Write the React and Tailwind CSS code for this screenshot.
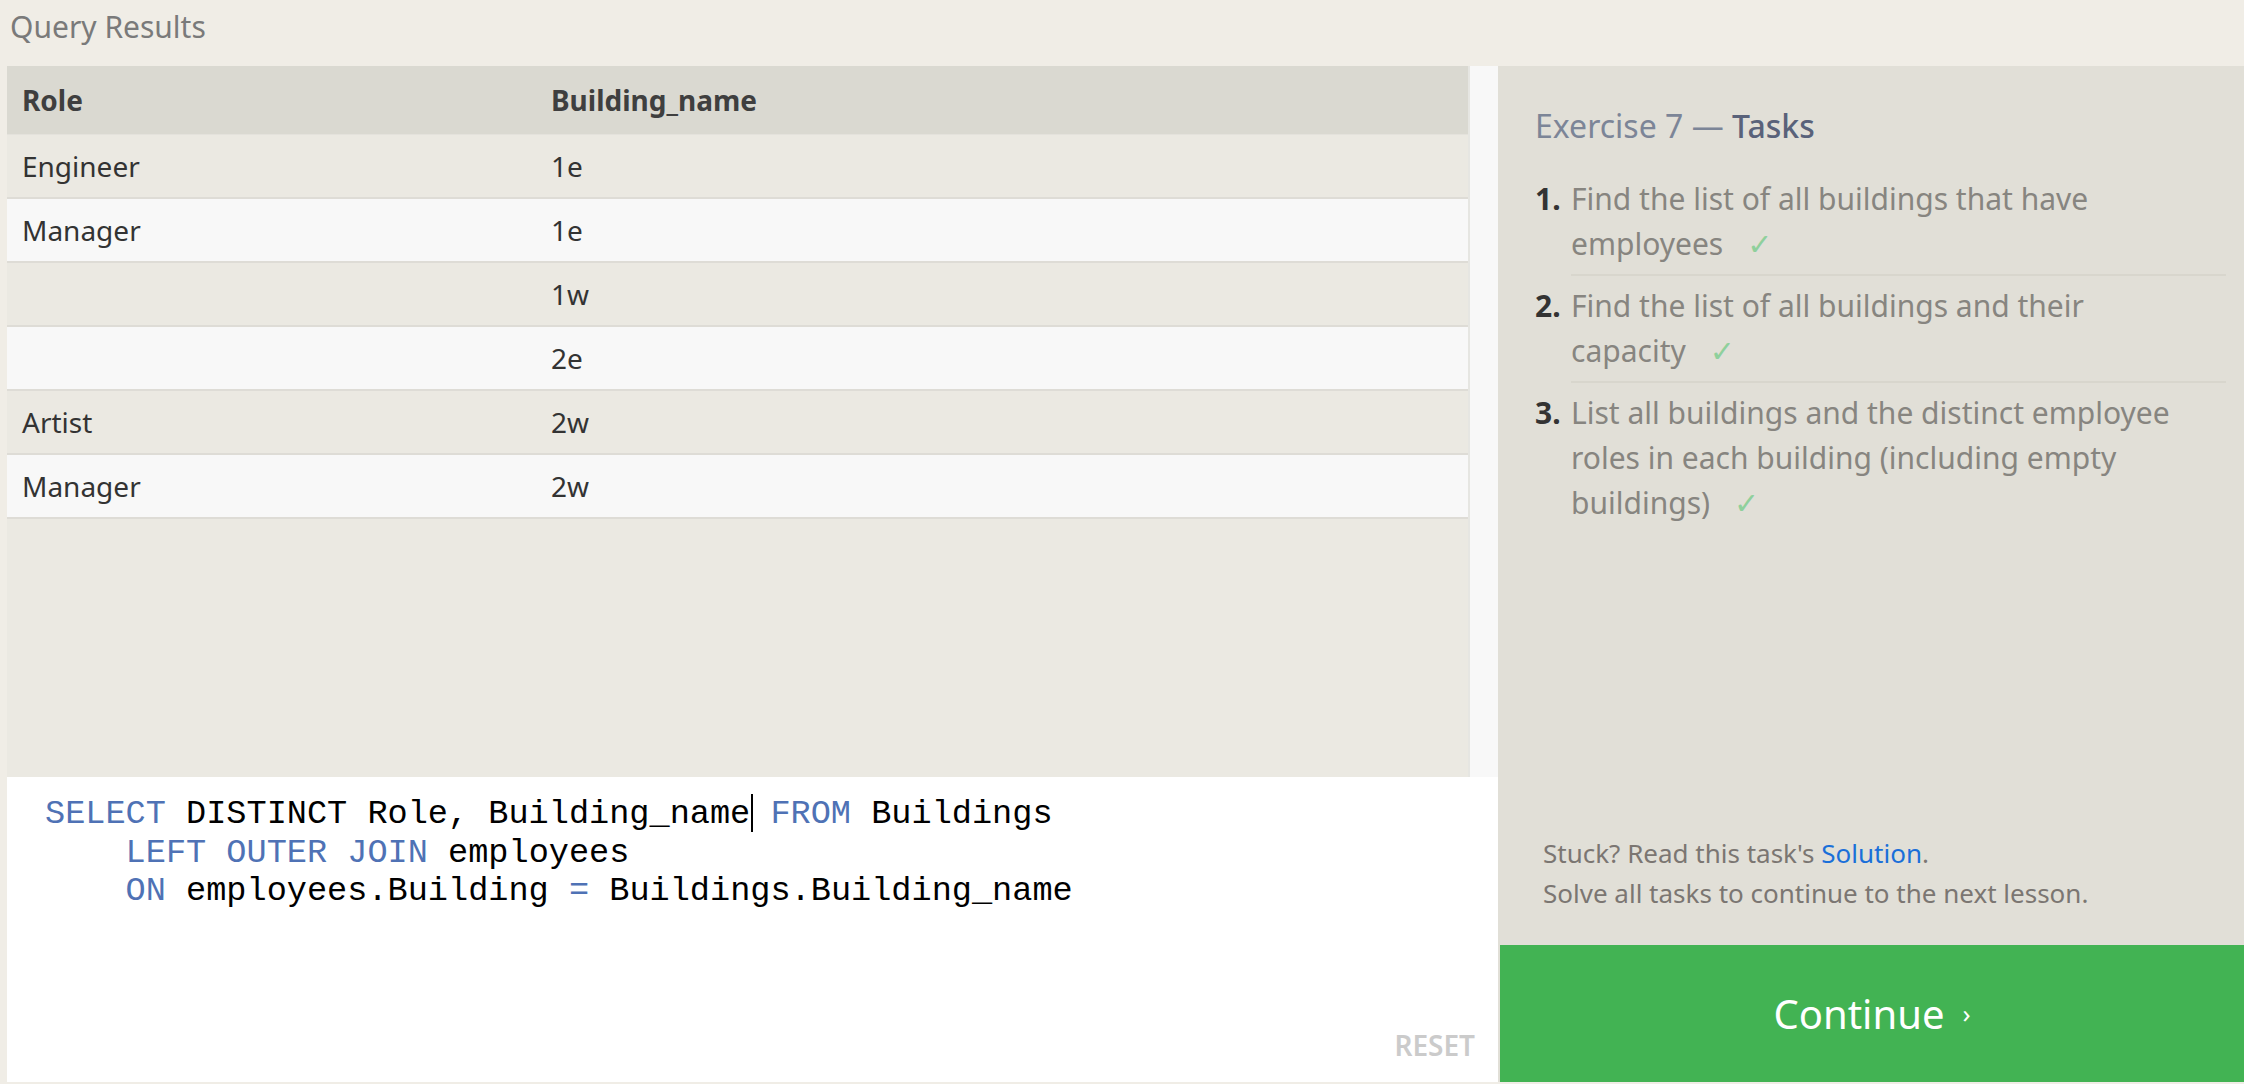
import React from "react";

const rows = [
  { role: "Engineer", building: "1e" },
  { role: "Manager", building: "1e" },
  { role: "", building: "1w" },
  { role: "", building: "2e" },
  { role: "Artist", building: "2w" },
  { role: "Manager", building: "2w" },
];

const tasks = [
  "Find the list of all buildings that have employees",
  "Find the list of all buildings and their capacity",
  "List all buildings and the distinct employee roles in each building (including empty buildings)",
];

function Kw({ children }) {
  return <span className="text-[#4f72b5]">{children}</span>;
}

export default function App() {
  return (
    <div className="w-[2244px] h-[1084px] bg-[#f0ede6] flex flex-col font-['Noto_Sans',sans-serif] overflow-hidden">
      {/* header */}
      <div className="h-[66px] shrink-0 px-[10px] text-[30px] leading-[54px] text-[#7a7a7a]">
        Query Results
      </div>

      <div className="flex-1 flex pl-[7px] pb-[2px] bg-[#f0ede6]">
        {/* left: results + editor */}
        <div className="w-[1491px] flex flex-col">
          <div className="h-[711px] flex">
            <div className="w-[1461px] bg-[#ebe9e2] flex flex-col">
              <div className="h-[69px] flex items-center bg-[#dad9d1] border-b border-[#e4e2dc] text-[28px] font-bold text-[#3f3f3f]">
                <div className="w-[529px] pl-[15px]">Role</div>
                <div className="pl-[15px]">Building_name</div>
              </div>
              {rows.map((r, i) => (
                <div
                  key={i}
                  className={`h-[64px] flex items-center border-b-2 border-[#dedcd6] text-[28px] text-[#333] ${
                    i % 2 === 0 ? "bg-[#ebe9e2]" : "bg-[#f8f8f8]"
                  }`}
                >
                  <div className="w-[529px] pl-[15px]">{r.role}</div>
                  <div className="pl-[15px]">{r.building}</div>
                </div>
              ))}
            </div>
            <div className="flex-1 bg-[#f8f8f8] border-l-2 border-[#e6e6e2]"></div>
          </div>

          {/* editor */}
          <div className="flex-1 bg-white flex flex-col pl-[38px] pt-[18px] pr-[23px] pb-[23px]">
            <pre className="font-['Liberation_Mono',monospace] text-[33.6px] leading-[38.5px] text-black">
              <Kw>SELECT</Kw> DISTINCT Role, Building_name
              <span className="relative">
                <span className="absolute left-[1px] top-[-1px] w-[2px] h-[38px] bg-black"></span>
              </span>{" "}
              <Kw>FROM</Kw> Buildings
              {"\n    "}
              <Kw>LEFT OUTER JOIN</Kw> employees
              {"\n    "}
              <Kw>ON</Kw> employees.Building <Kw>=</Kw> Buildings.Building_name
            </pre>
            <div className="flex-1"></div>
            <div className="self-end text-[28px] leading-[28px] text-[#cbcbcb] font-semibold">RESET</div>
          </div>
        </div>

        {/* right: tasks */}
        <div className="flex-1 flex flex-col bg-[#e1dfd7]">
          <div className="flex-1 pl-[37px] pr-[18px] pt-[40px]">
            <h2 className="text-[32px] leading-[40px] text-[#7c8597]">
              Exercise 7 — <span className="text-[#59627a] font-medium">Tasks</span>
            </h2>
            <ol className="mt-[30px]">
              {tasks.map((t, i) => (
                <li key={i} className={`flex text-[30px] leading-[45px] ${i > 0 ? "pt-[7px]" : ""}`}>
                  <span className="w-[36px] shrink-0 font-bold text-[#333]">{i + 1}.</span>
                  <div
                    className={`flex-1 text-[#878580] ${
                      i < tasks.length - 1 ? "pb-[7px] border-b-2 border-[#d8d6cd]" : ""
                    }`}
                  >
                    {t}
                    <span className="ml-[24px] font-['DejaVu_Sans',sans-serif] text-[30px] leading-[45px] text-[#8fd09c]">✓</span>
                  </div>
                </li>
              ))}
            </ol>
          </div>

          <div className="pl-[45px] mb-[32px] text-[26px] leading-[40px] text-[#7b7672]">
            <p>
              Stuck? Read this task's <span className="text-[#1a6fd9]">Solution</span>.
            </p>
            <p>Solve all tasks to continue to the next lesson.</p>
          </div>

          <button className="h-[137px] ml-[2px] bg-[#42b353] text-white flex items-center justify-center">
            <span className="text-[40px]">Continue</span>
            <span className="ml-[18px] text-[26px]">›</span>
          </button>
        </div>
      </div>
    </div>
  );
}
